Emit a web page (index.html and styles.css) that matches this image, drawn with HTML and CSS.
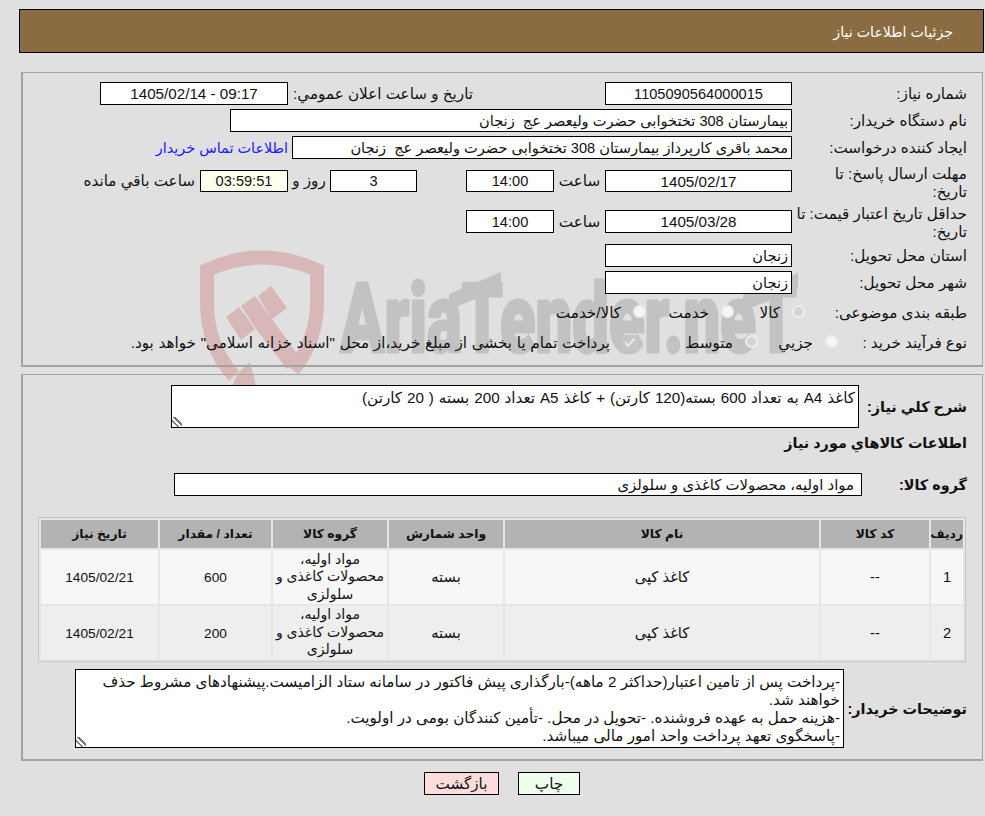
FILE: index.html
```html
<!DOCTYPE html>
<html lang="fa" dir="rtl">
<head>
<meta charset="utf-8">
<title>جزئیات اطلاعات نیاز</title>
<link rel="stylesheet" href="styles.css">
</head>
<body>
<svg class="watermark" viewBox="190 240 620 160" width="620" height="160" aria-hidden="true">
  <path class="wm-shield" d="M234 376C216 356 207 332 207 302V270Q262 245 317 270V302C317 332 306 354 293 370"/>
  <polygon class="wm-fill" points="250,362 256,386 232,386 239,372"/>
  <polygon class="wm-fill" points="226,317 239,307 255,329 241,340"/>
  <polygon class="wm-fill" points="241,306 255,296 272,319 300,358 287,369 256,329"/>
  <polygon class="wm-fill" points="258,296 271,286 287,308 272,319"/>
  <text class="wm-text" x="340" y="352" textLength="457" lengthAdjust="spacingAndGlyphs" direction="ltr">AriaTender.neT</text>
  <polygon class="wm-grey" points="449,294 501,272 501,288 449,310"/>
  <polygon class="wm-grey" points="743,295 798,273 798,289 743,311"/>
  <rect class="wm-box" x="621" y="335" width="17" height="16"/>
  <path class="wm-check" d="M625 342l3 4 6-7"/>
</svg>

<header class="title-bar">جزئیات اطلاعات نیاز</header>

<section class="panel panel-info">
  <div class="row">
    <div class="label">شماره نیاز:</div>
    <div class="box center w187">1105090564000015</div>
    <div class="label-inline m132">تاریخ و ساعت اعلان عمومي:</div>
    <div class="box center w188 m5 date" dir="ltr">1405/02/14 - 09:17</div>
  </div>
  <div class="row">
    <div class="label">نام دستگاه خریدار:</div>
    <div class="box w562">بیمارستان 308 تختخوابی حضرت ولیعصر عج&nbsp; زنجان</div>
  </div>
  <div class="row">
    <div class="label">ایجاد کننده درخواست:</div>
    <div class="box w500">محمد باقری کارپرداز بیمارستان 308 تختخوابی حضرت ولیعصر عج&nbsp; زنجان</div>
    <a class="link" href="#">اطلاعات تماس خریدار</a>
  </div>
  <div class="row row-tall">
    <div class="label">مهلت ارسال پاسخ: تا<br>تاریخ:</div>
    <div class="box center w187 h22 date">1405/02/17</div>
    <div class="unit">ساعت</div>
    <div class="box center w88 h22">14:00</div>
    <div class="box center w87 h22 m49">3</div>
    <div class="unit-day">روز و</div>
    <div class="box center w88 h22 timer">03:59:51</div>
    <div class="label-inline m5">ساعت باقي مانده</div>
  </div>
  <div class="row row-taller">
    <div class="label">حداقل تاریخ اعتبار قیمت: تا<br>تاریخ:</div>
    <div class="box center w187 date">1405/03/28</div>
    <div class="unit">ساعت</div>
    <div class="box center w88">14:00</div>
  </div>
  <div class="row">
    <div class="label">استان محل تحویل:</div>
    <div class="box w187">زنجان</div>
  </div>
  <div class="row">
    <div class="label">شهر محل تحویل:</div>
    <div class="box w187">زنجان</div>
  </div>
  <div class="row row-radio">
    <div class="label label-topic">طبقه بندی موضوعی:</div>
    <label class="opt opt-a"><input type="radio" name="topic" checked disabled><span>کالا</span></label>
    <label class="opt opt-b"><input type="radio" name="topic" disabled><span>خدمت</span></label>
    <label class="opt opt-c"><input type="radio" name="topic" disabled><span>کالا/خدمت</span></label>
  </div>
  <div class="row row-radio">
    <div class="label label-process">نوع فرآیند خرید :</div>
    <label class="opt opt-d"><input type="radio" name="process" disabled><span>جزيي</span></label>
    <label class="opt opt-e"><input type="radio" name="process" checked disabled><span>متوسط</span></label>
    <div class="note">پرداخت تمام یا بخشی از مبلغ خرید،از محل "اسناد خزانه اسلامی" خواهد بود.</div>
  </div>
</section>

<section class="panel panel-goods">
  <div class="row-summary">
    <div class="label-strong">شرح کلي نياز:</div>
    <textarea class="area area-summary" readonly>کاغذ A4 به تعداد 600 بسته(120 کارتن) + کاغذ A5 تعداد 200 بسته ( 20 کارتن)</textarea>
  </div>
  <h2 class="heading">اطلاعات کالاهاي مورد نياز</h2>
  <div class="row-group">
    <div class="label-strong">گروه کالا:</div>
    <div class="box w688 group-box">مواد اولیه، محصولات کاغذی و سلولزی</div>
  </div>
  <table class="goods">
    <colgroup>
      <col class="c-idx"><col class="c-code"><col class="c-name"><col class="c-unit"><col class="c-group"><col class="c-qty"><col class="c-date">
    </colgroup>
    <thead>
      <tr><th>ردیف</th><th>کد کالا</th><th>نام کالا</th><th>واحد شمارش</th><th>گروه کالا</th><th>تعداد / مقدار</th><th>تاریخ نیاز</th></tr>
    </thead>
    <tbody>
      <tr><td>1</td><td>--</td><td>کاغذ کپی</td><td>بسته</td><td class="group">مواد اولیه،<br>محصولات کاغذی و<br>سلولزی</td><td class="num">600</td><td class="num">1405/02/21</td></tr>
      <tr><td>2</td><td>--</td><td>کاغذ کپی</td><td>بسته</td><td class="group">مواد اولیه،<br>محصولات کاغذی و<br>سلولزی</td><td class="num">200</td><td class="num">1405/02/21</td></tr>
    </tbody>
  </table>
  <div class="row-notes">
    <div class="label-strong">توضیحات خریدار:</div>
    <textarea class="area area-notes" readonly>-پرداخت پس از تامین اعتبار(حداکثر 2 ماهه)-بارگذاری پیش فاکتور در سامانه ستاد الزامیست.پیشنهادهای مشروط حذف
خواهند شد.
-هزینه حمل به عهده فروشنده. -تحویل در محل. -تأمین کنندگان بومی در اولویت.
-پاسخگوی تعهد پرداخت واحد امور مالی میباشد.</textarea>
  </div>
</section>

<div class="actions">
  <button class="btn btn-print" type="button">چاپ</button>
  <button class="btn btn-back" type="button">بازگشت</button>
</div>
</body>
</html>
```

FILE: styles.css
```css
* { box-sizing: border-box; }
html, body { margin: 0; padding: 0; }
body {
  position: relative;
  height: 816px;
  overflow: hidden;
  background: #e0e0e0;
  color: #111;
  font-family: "Liberation Sans", "DejaVu Sans", sans-serif;
  font-size: 15.2px;
  line-height: 18px;
}
.watermark { position: absolute; left: 190px; top: 240px; }
.wm-shield { fill: none; stroke: #d7b7b7; stroke-width: 14; }
.wm-fill { fill: #d7b7b7; }
.wm-text {
  font-family: Roboto, sans-serif;
  font-weight: 900;
  font-size: 97px;
  fill: #c2c2c2;
  stroke: #c2c2c2;
  stroke-width: 3;
  stroke-linejoin: round;
}
.wm-grey { fill: #c2c2c2; }
.wm-box { fill: #c6c6c6; }
.wm-check { fill: none; stroke: #ececec; stroke-width: 2; }

.title-bar {
  position: relative;
  height: 44px;
  margin: 9px 1px 0 19px;
  padding-right: 30px;
  border: 1px solid #000;
  background: #8b6c42;
  color: #fff;
  font-size: 14.2px;
  line-height: 45px;
}
.panel {
  position: relative;
  margin: 0 2px 0 21px;
  padding-right: 15px;
  border: 1px solid #a3a3a3;
  border-width: 1px 1px 2px 2px;
}
.panel-info { height: 295px; margin-top: 19px; padding-top: 9px; }
.panel-goods { height: 387px; margin-top: 7px; padding-top: 10px; }

.row { display: flex; align-items: center; min-height: 23px; margin-bottom: 4px; }
.row-tall { height: 36px; }
.row-taller { height: 37px; }
.row-tall .label, .row-taller .label { padding-top: 3px; }
.row-radio { height: 30px; margin-bottom: 0; }
.label { width: 172px; flex: none; }
.label-topic { width: 162px; }
.label-process { width: 129px; }
.label-inline { flex: none; white-space: nowrap; }
.box {
  flex: none;
  height: 23px;
  padding: 0 3px;
  border: 1px solid #000;
  background: #fff;
  font-size: 14.6px;
  line-height: 22px;
  white-space: nowrap;
  overflow: hidden;
}
.date { font-size: 15.2px; }
.center { text-align: center; }
.group-box { padding-right: 7px; font-size: 14.9px; }
.row > .box.w187, .row > .box.w562, .row > .box.w500 { margin-right: 3px; }
.w187 { width: 187px; }
.w188 { width: 188px; }
.w562 { width: 562px; }
.w500 { width: 500px; }
.w88 { width: 88px; }
.w87 { width: 87px; }
.w688 { width: 688px; }
.h22 { height: 22px; line-height: 21px; }
.m132 { margin-right: 132px; }
.m49 { margin-right: 49px; }
.m5 { margin-right: 5px; }
.timer { background: #ffffee; }
.unit { width: 51px; flex: none; text-align: center; }
.unit-day { width: 42px; flex: none; text-align: center; }
.link { margin-right: 4px; color: #1a1aff; font-size: 14.4px; text-decoration: none; white-space: nowrap; }

.opt { display: flex; align-items: center; flex: none; white-space: nowrap; }
.opt input {
  appearance: none;
  flex: none;
  width: 13px;
  height: 13px;
  margin: 0 0 3px;
  border: 2px solid #eeeeee;
  border-radius: 50%;
  background: #f6f6f6;
}
.opt input:checked { background: #d4d4d4; }
.opt span { margin-right: 12px; }
.opt-a { width: 71px; }
.opt-b { width: 88px; }
.opt-c { width: 91px; }
.opt-d { width: 80px; }
.opt-e { width: 148px; }
.note { flex: none; white-space: nowrap; word-spacing: 0.5px; }

.label-strong { flex: none; font-weight: 700; font-size: 14.4px; }
.row-summary { display: flex; align-items: center; height: 43px; }
.row-summary .label-strong { width: 108px; }
.row-group { display: flex; align-items: center; height: 23px; margin-top: 21px; }
.row-group .label-strong { width: 105px; }
.row-notes { display: flex; align-items: center; height: 79px; margin-top: 7px; }
.row-notes .label-strong { width: 123px; }
.heading { margin: 6px 0 0; font-size: 14.4px; line-height: 18px; font-weight: 700; }
.area {
  display: block;
  flex: none;
  padding: 3px;
  border: 1px solid #000;
  border-radius: 0;
  outline: none;
  background: #fff;
  color: #111;
  font: inherit;
  line-height: 18px;
  overflow: hidden;
}
.area::-webkit-resizer {
  background: linear-gradient(45deg, transparent 26%, #777 26% 38%, transparent 38% 54%, #777 54% 68%, transparent 68%) left bottom / 10px 10px no-repeat;
}
.area-summary { width: 688px; height: 43px; word-spacing: 0.7px; }
.area-notes { width: 769px; height: 79px; }

.goods {
  table-layout: fixed;
  width: 928px;
  height: 145px;
  margin: 21px 1px 0 0;
  border: 1px solid #c4c4c4;
  border-spacing: 2px;
  background: #e6e6e6;
}
.c-idx { width: 32px; }
.c-code { width: 108px; }
.c-name { width: 314px; }
.c-unit { width: 114px; }
.c-group { width: 114px; }
.c-qty { width: 111px; }
.c-date { width: 117px; }
.goods th {
  height: 28px;
  padding: 0;
  background: #b3b3b3;
  font-size: 12.3px;
  font-weight: 700;
}
.goods td { padding: 2px 0 0; text-align: center; background: #f7f7f7; font-size: 14.7px; line-height: 17.5px; }
.goods td.num { font-size: 13.7px; }
.goods td.group { padding: 0; font-size: 14px; line-height: 17.5px; }
.goods tbody tr + tr td { background: #eeeeee; }

.actions {
  position: relative;
  display: flex;
  justify-content: center;
  gap: 19px;
  margin-top: 11px;
  padding-left: 19px;
}
.btn {
  height: 23px;
  padding: 0;
  border: 1px solid #000;
  color: #111;
  font: inherit;
}
.btn-print { width: 62px; background: #eeffee; }
.btn-back { width: 75px; background: #ffdddd; }
```
